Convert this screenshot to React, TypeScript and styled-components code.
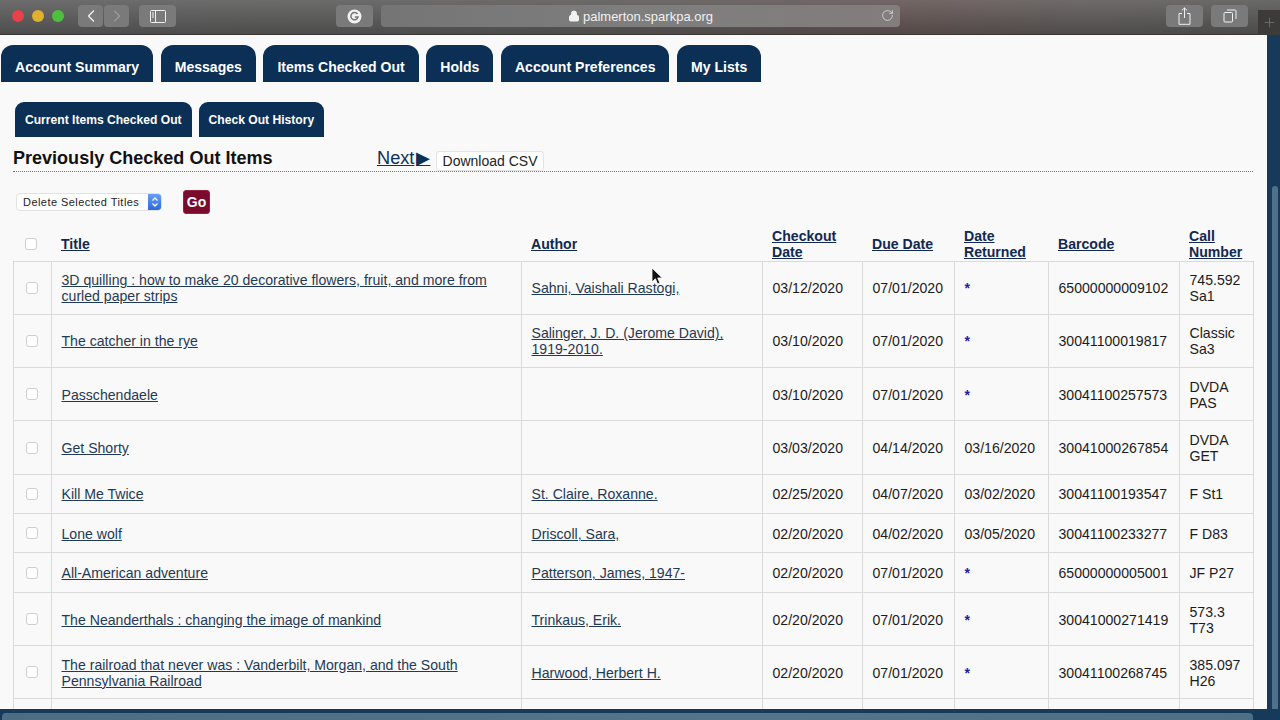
import React from "react";
import styled, { createGlobalStyle } from "styled-components";
import { ChevronLeft, ChevronRight, Lock, RotateCw, Plus } from "lucide-react";

const Global = createGlobalStyle`
  html, body { margin: 0; padding: 0; height: 100%; overflow: hidden; background: #faf9fa; }
  body { font-family: "Liberation Sans", Arial, sans-serif; }
  #root { height: 100%; }
`;

const Page = styled.div`
  position: relative;
  width: 1280px;
  height: 720px;
  display: flex;
  flex-direction: column;
  overflow: hidden;
`;

const Toolbar = styled.header`
  flex: none;
  height: 35px;
  box-sizing: border-box;
  border-bottom: 1px solid #3a3634;
  background:
    linear-gradient(180deg, rgba(255, 255, 255, 0.1), rgba(0, 0, 0, 0.16)),
    linear-gradient(90deg, #5c5c5c 0%, #5b5a59 45%, #5f5655 62%, #645554 72%, #5e5a59 84%, #585857 100%);
  display: flex;
  align-items: flex-start;
  padding: 5px 0 0 12px;
  color: #e8e8e8;
`;

const Lights = styled.div`
  display: flex;
  gap: 8px;
  margin-top: 5px;
  margin-right: 14px;
`;

const Light = styled.span<{ $c: string }>`
  width: 12px;
  height: 12px;
  border-radius: 50%;
  background: ${(p) => p.$c};
`;

const ToolBtn = styled.div<{ $w: number; $ml?: number; $dim?: boolean }>`
  width: ${(p) => p.$w}px;
  height: 22px;
  margin-left: ${(p) => p.$ml ?? 0}px;
  flex: none;
  display: flex;
  align-items: center;
  justify-content: center;
  border-radius: 4px;
  background: #7a7a7a;
  color: ${(p) => (p.$dim ? "#9c9c9c" : "#f0f0f0")};
`;

const UrlField = styled.div`
  position: relative;
  width: 519px;
  height: 22px;
  margin-left: 8px;
  flex: none;
  border-radius: 4px;
  background: linear-gradient(90deg, #757575, #7e7e7e 50%, #837d7c);
  display: flex;
  align-items: center;
  justify-content: center;
  gap: 3px;
  font-size: 13px;
  color: #f1f1f1;
`;

const Reload = styled.span`
  position: absolute;
  right: 6px;
  top: 4px;
  display: flex;
  color: #e4e4e4;
`;

const NewTab = styled.div`
  width: 22px;
  height: 25px;
  margin-left: 10px;
  margin-top: 5px;
  flex: none;
  background: #3d3b3a;
  color: #77787a;
  display: flex;
  align-items: center;
  justify-content: center;
`;

const Middle = styled.div`
  flex: 1;
  min-height: 0;
  display: flex;
`;

const Content = styled.main`
  flex: 1;
  min-width: 0;
  overflow: hidden;
  background: #faf9fa;
`;

const Gutter = styled.aside`
  flex: none;
  width: 13px;
  background: #17395a;
  padding: 151px 2px 0 5px;
  box-sizing: border-box;
`;

const VThumb = styled.div`
  height: 100%;
  border-radius: 4px 4px 0 0;
  background: #4f7189;
`;

const BottomBar = styled.footer`
  flex: none;
  height: 11px;
  background: #17395a;
  padding: 4px 27px 0 2px;
  box-sizing: border-box;
`;

const HThumb = styled.div`
  height: 100%;
  border-radius: 4px 4px 0 0;
  background: linear-gradient(90deg, #4d6d85, #55758c 60%, #4f6f87);
`;

const MainTabs = styled.nav`
  display: flex;
  gap: 7.6px;
  margin: 10px 0 0 1px;
`;

const MainTab = styled.a`
  height: 37px;
  padding: 7px 14px 0;
  box-sizing: border-box;
  display: flex;
  align-items: center;
  background: #0b2f55;
  border-radius: 12px 12px 0 0;
  color: #fff;
  font-size: 14.05px;
  font-weight: 700;
`;

const SubTabs = styled.nav`
  display: flex;
  gap: 7px;
  margin: 20px 0 0 15px;
`;

const SubTab = styled.a`
  height: 35px;
  padding: 0 10px;
  box-sizing: border-box;
  display: flex;
  align-items: center;
  background: #0b2f55;
  border-radius: 9px 9px 0 0;
  color: #fff;
  font-size: 12.1px;
  font-weight: 700;
`;

const HeadingRow = styled.div`
  display: flex;
  align-items: flex-end;
  width: 1240px;
  height: 24px;
  margin: 11px 0 0 13px;
  box-sizing: border-box;
  padding-bottom: 1px;
  border-bottom: 1px dotted #777;
`;

const Heading = styled.h2`
  width: 364px;
  margin: 0 0 2px;
  font-size: 18.05px;
  line-height: 20px;
  font-weight: 700;
  color: #111;
`;

const NextLink = styled.a`
  font-size: 18.2px;
  line-height: 20px;
  margin-bottom: 2px;
  margin-right: 4px;
  width: 55px;
  flex: none;
  color: #0c3157;
  text-decoration: underline;
  white-space: nowrap;
`;

const NextArrow = styled.span`
  margin-left: 2px;
  font-size: 18px;
`;

const CsvButton = styled.button`
  width: 108px;
  height: 20px;
  padding: 0;
  margin-bottom: -1px;
  border: 1px solid #e3e3e3;
  border-radius: 3px;
  background: #fff;
  font-family: inherit;
  font-size: 14px;
  color: #222;
`;

const ActionRow = styled.div`
  display: flex;
  align-items: center;
  height: 24px;
  margin: 18px 0 0 16px;
`;

const FakeSelect = styled.div`
  width: 146px;
  height: 18px;
  box-sizing: border-box;
  display: flex;
  align-items: center;
  justify-content: space-between;
  padding-left: 6px;
  background: #fff;
  border: 1px solid #e2e2e2;
  border-radius: 4px;
  font-size: 11px;
  letter-spacing: 0.45px;
  color: #222;
  overflow: hidden;
`;

const Stepper = styled.span`
  width: 14px;
  height: 18px;
  margin-right: -1px;
  display: flex;
  align-items: center;
  justify-content: center;
  background: linear-gradient(#6aa2f6, #2a66dc);
`;

const GoButton = styled.button`
  width: 27px;
  height: 24px;
  margin-left: 21px;
  padding: 0;
  border: 1px solid #94243f;
  border-radius: 3px;
  background: #7b0b2c;
  color: #fff;
  font-family: inherit;
  font-size: 14px;
  font-weight: 700;
`;

const Table = styled.table`
  width: 1240px;
  margin: 14px 0 0 13px;
  table-layout: fixed;
  border-collapse: collapse;
  font-size: 14.1px;
  line-height: 16px;
  color: #1b1b1b;
`;

const Th = styled.th`
  height: 32.5px;
  padding: 0 0 0 9.5px;
  text-align: left;
  vertical-align: middle;
  font-weight: 700;
`;

const CheckHead = styled(Th)`
  padding: 0 3px 0 0;
`;

const HeadLink = styled.a`
  color: #12294f;
  text-decoration: underline;
`;

const Tr = styled.tr<{ $h: number }>`
  height: ${(p) => p.$h}px;
`;

const Td = styled.td`
  padding: 1px 4px 0 9.5px;
  border: 1px solid #dadada;
  vertical-align: middle;
`;

const CheckCell = styled(Td)`
  padding: 0 2px 0 0;
  text-align: center;
`;

const ItemLink = styled.a`
  color: #1f3a54;
  text-decoration: underline;
`;

const Box = styled.span`
  display: block;
  width: 12px;
  height: 12px;
  margin: 0 auto;
  box-sizing: border-box;
  background: #fff;
  border: 1px solid #cfcfcf;
  border-radius: 3px;
`;

const Star = styled.span`
  position: relative;
  top: 0px;
  color: #1f1fa8;
  font-weight: 700;
`;

const Cursor = styled.svg`
  position: absolute;
  left: 651px;
  top: 267px;
`;

type Row = { t: string; a?: string; c: string; d: string; r?: string; b: string; n: React.ReactNode; h: number };

const tabs = ["Account Summary", "Messages", "Items Checked Out", "Holds", "Account Preferences", "My Lists"];

const two = (x: string, y: string) => (
  <>
    {x}
    <br />
    {y}
  </>
);

const rows: Row[] = [
  { t: "3D quilling : how to make 20 decorative flowers, fruit, and more from curled paper strips", a: "Sahni, Vaishali Rastogi,", c: "03/12/2020", d: "07/01/2020", b: "65000000009102", n: two("745.592", "Sa1"), h: 53.3 },
  { t: "The catcher in the rye", a: "Salinger, J. D. (Jerome David), 1919-2010.", c: "03/10/2020", d: "07/01/2020", b: "30041100019817", n: two("Classic", "Sa3"), h: 53.3 },
  { t: "Passchendaele", c: "03/10/2020", d: "07/01/2020", b: "30041100257573", n: two("DVDA", "PAS"), h: 53.3 },
  { t: "Get Shorty", c: "03/03/2020", d: "04/14/2020", r: "03/16/2020", b: "30041000267854", n: two("DVDA", "GET"), h: 53.3 },
  { t: "Kill Me Twice", a: "St. Claire, Roxanne.", c: "02/25/2020", d: "04/07/2020", r: "03/02/2020", b: "30041100193547", n: "F St1", h: 39.4 },
  { t: "Lone wolf", a: "Driscoll, Sara,", c: "02/20/2020", d: "04/02/2020", r: "03/05/2020", b: "30041100233277", n: "F D83", h: 39.4 },
  { t: "All-American adventure", a: "Patterson, James, 1947-", c: "02/20/2020", d: "07/01/2020", b: "65000000005001", n: "JF P27", h: 39.4 },
  { t: "The Neanderthals : changing the image of mankind", a: "Trinkaus, Erik.", c: "02/20/2020", d: "07/01/2020", b: "30041000271419", n: two("573.3", "T73"), h: 53.3 },
  { t: "The railroad that never was : Vanderbilt, Morgan, and the South Pennsylvania Railroad", a: "Harwood, Herbert H.", c: "02/20/2020", d: "07/01/2020", b: "30041100268745", n: two("385.097", "H26"), h: 53.3 },
];

const widths = [38, 470, 241, 100, 92, 94, 131, 74];

export default function App() {
  return (
    <Page>
      <Global />
      <Toolbar>
        <Lights>
          <Light $c="#e8414a" />
          <Light $c="#dfb02d" />
          <Light $c="#4fbf3f" />
        </Lights>
        <ToolBtn $w={25}><ChevronLeft size={20} strokeWidth={1.6} /></ToolBtn>
        <ToolBtn $w={25} $ml={1} $dim><ChevronRight size={20} strokeWidth={1.4} /></ToolBtn>
        <ToolBtn $w={37} $ml={10}>
          <svg width="16" height="13" viewBox="0 0 16 13" fill="none" stroke="currentColor">
            <rect x="0.5" y="0.5" width="15" height="12" rx="1" />
            <path d="M5.5 0.5v12M2 3h2M2 5h2M2 7h2" />
          </svg>
        </ToolBtn>
        <ToolBtn $w={37} $ml={160}>
          <svg width="15" height="15" viewBox="0 0 15 15">
            <circle cx="7.5" cy="7.5" r="7" fill="#f2f2f2" />
            <path d="M10.5 5.2A3.6 3.6 0 1 0 11 8H7.8" fill="none" stroke="#777" strokeWidth="1.5" />
          </svg>
        </ToolBtn>
        <UrlField>
          <Lock size={12} fill="#f1f1f1" strokeWidth={2} />
          palmerton.sparkpa.org
          <Reload><RotateCw size={13} strokeWidth={1.4} /></Reload>
        </UrlField>
        <ToolBtn $w={37} $ml={266}>
          <svg width="13" height="18" viewBox="0 0 13 18" fill="none" stroke="currentColor">
            <path d="M4 6.5H1v10.8h11V6.5H9M6.5 11V1M3.8 3.5 6.5 .9l2.7 2.6" />
          </svg>
        </ToolBtn>
        <ToolBtn $w={37} $ml={8}>
          <svg width="14" height="14" viewBox="0 0 14 14" fill="none" stroke="currentColor">
            <rect x="1" y="3.5" width="8.5" height="9.5" rx="1" />
            <path d="M4 1h8a1 1 0 0 1 1 1v8" />
          </svg>
        </ToolBtn>
        <NewTab><Plus size={15} strokeWidth={1.2} /></NewTab>
      </Toolbar>
      <Middle>
        <Content>
          <MainTabs>
            {tabs.map((t) => <MainTab key={t}>{t}</MainTab>)}
          </MainTabs>
          <SubTabs>
            <SubTab>Current Items Checked Out</SubTab>
            <SubTab>Check Out History</SubTab>
          </SubTabs>
          <HeadingRow>
            <Heading>Previously Checked Out Items</Heading>
            <NextLink>Next<NextArrow>▶</NextArrow></NextLink>
            <CsvButton>Download CSV</CsvButton>
          </HeadingRow>
          <ActionRow>
            <FakeSelect>
              Delete Selected Titles
              <Stepper>
                <svg width="8" height="12" viewBox="0 0 8 12" fill="none" stroke="#fff" strokeWidth="1.3">
                  <path d="M1.5 4.5 4 2l2.5 2.5M1.5 7.5 4 10l2.5-2.5" />
                </svg>
              </Stepper>
            </FakeSelect>
            <GoButton>Go</GoButton>
          </ActionRow>
          <Table>
            <colgroup>
              {widths.map((w, i) => <col key={i} width={w} />)}
            </colgroup>
            <thead>
              <tr>
                <CheckHead><Box /></CheckHead>
                <Th><HeadLink>Title</HeadLink></Th>
                <Th><HeadLink>Author</HeadLink></Th>
                <Th><HeadLink>Checkout Date</HeadLink></Th>
                <Th><HeadLink>Due Date</HeadLink></Th>
                <Th><HeadLink>Date Returned</HeadLink></Th>
                <Th><HeadLink>Barcode</HeadLink></Th>
                <Th><HeadLink>Call Number</HeadLink></Th>
              </tr>
            </thead>
            <tbody>
              {rows.map((r) => (
                <Tr key={r.t} $h={r.h}>
                  <CheckCell><Box /></CheckCell>
                  <Td><ItemLink>{r.t}</ItemLink></Td>
                  <Td>{r.a && <ItemLink>{r.a}</ItemLink>}</Td>
                  <Td>{r.c}</Td>
                  <Td>{r.d}</Td>
                  <Td>{r.r ?? <Star>*</Star>}</Td>
                  <Td>{r.b}</Td>
                  <Td>{r.n}</Td>
                </Tr>
              ))}
              <Tr $h={40}>
                <CheckCell /><Td /><Td /><Td /><Td /><Td /><Td /><Td />
              </Tr>
            </tbody>
          </Table>
        </Content>
        <Gutter><VThumb /></Gutter>
      </Middle>
      <BottomBar><HThumb /></BottomBar>
      <Cursor width="12" height="19" viewBox="0 0 12 19">
        <path d="M1 1v14l3.4-3.2L6.6 17l2.3-1-2.2-5h4.6z" fill="#111" stroke="#fff" strokeWidth="0.8" />
      </Cursor>
    </Page>
  );
}
